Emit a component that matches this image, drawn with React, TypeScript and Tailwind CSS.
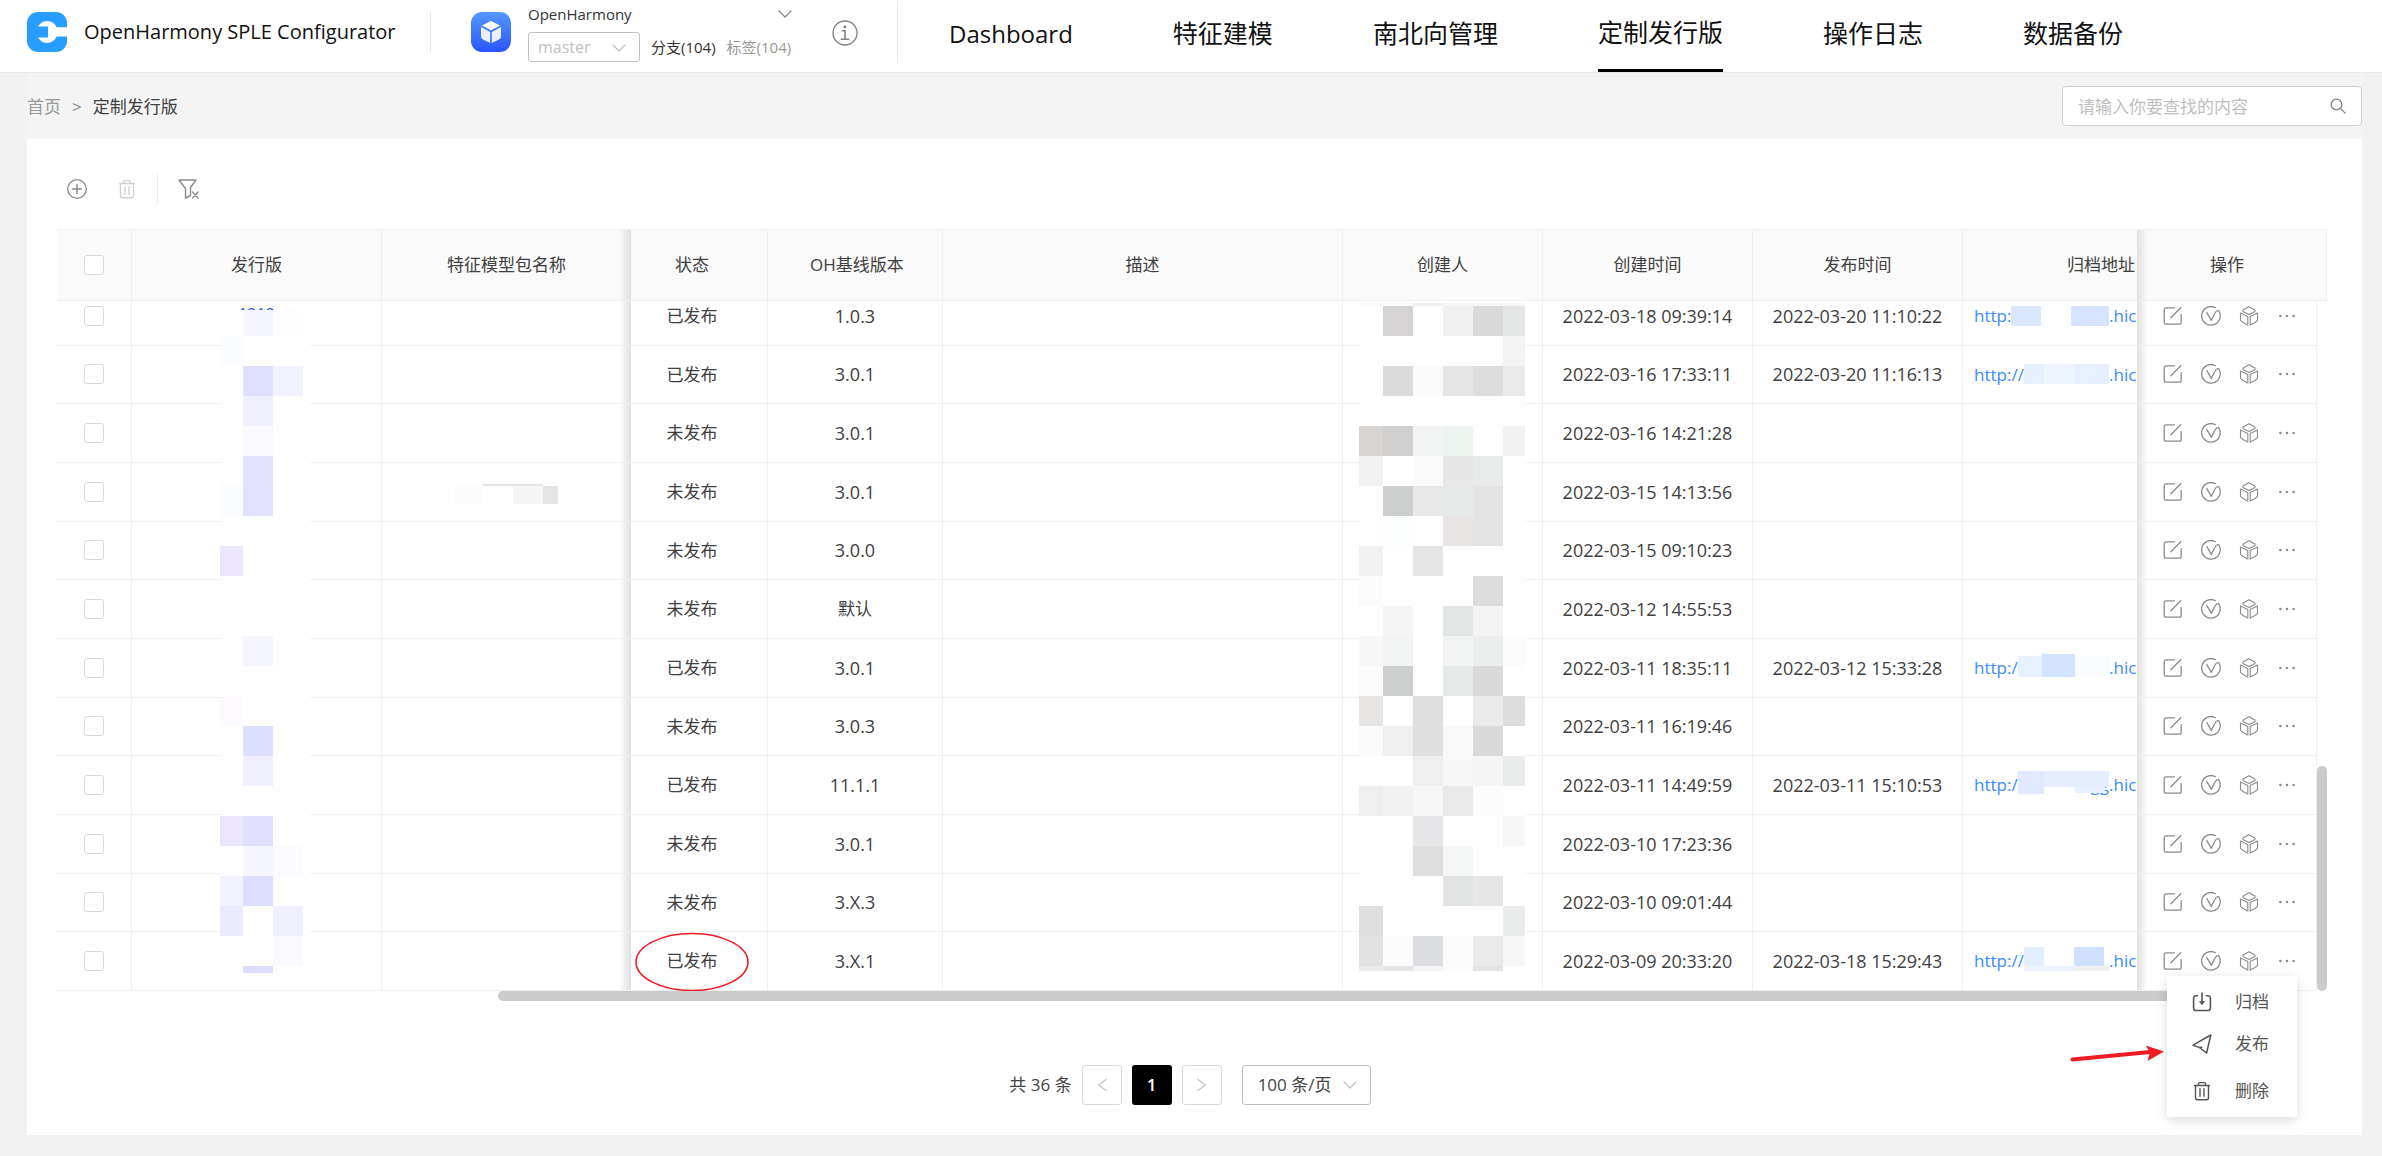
import React from "react";

type Row = {
  status: "已发布" | "未发布";
  baseline: string;
  created: string;
  released?: string;
  link?: LinkMask;
  masked?: boolean;
  circled?: boolean;
  clipped?: boolean;
};

type LinkMask = { prefix: string; tail?: string; blocks: [number, number, number, number, string][] };

const rows: Row[] = [
  {
    status: "已发布",
    baseline: "1.0.3",
    created: "2022-03-18 09:39:14",
    released: "2022-03-20 11:10:22",
    clipped: true,
    link: { prefix: "http:", blocks: [[0, 4, 31, 20, "#dbe6ff"], [31, 4, 30, 20, "#fefefe"], [61, 4, 39, 20, "#d7e3ff"]] },
  },
  {
    status: "已发布",
    baseline: "3.0.1",
    created: "2022-03-16 17:33:11",
    released: "2022-03-20 11:16:13",
    link: { prefix: "http://", blocks: [[0, 4, 24, 20, "#e6efff"], [24, 4, 35, 20, "#eff5ff"], [59, 4, 41, 20, "#e6efff"]] },
  },
  { status: "未发布", baseline: "3.0.1", created: "2022-03-16 14:21:28" },
  { status: "未发布", baseline: "3.0.1", created: "2022-03-15 14:13:56", masked: true },
  { status: "未发布", baseline: "3.0.0", created: "2022-03-15 09:10:23" },
  { status: "未发布", baseline: "默认", created: "2022-03-12 14:55:53" },
  {
    status: "已发布",
    baseline: "3.0.1",
    created: "2022-03-11 18:35:11",
    released: "2022-03-12 15:33:28",
    link: { prefix: "http:/", blocks: [[0, 2, 26, 21, "#e8f1ff"], [26, 0, 36, 23, "#d3e2ff"], [62, 2, 38, 21, "#fafcff"]] },
  },
  { status: "未发布", baseline: "3.0.3", created: "2022-03-11 16:19:46" },
  {
    status: "已发布",
    baseline: "11.1.1",
    created: "2022-03-11 14:49:59",
    released: "2022-03-11 15:10:53",
    link: { prefix: "http:/", tail: "gg", blocks: [[0, 0, 28, 23, "#e0e9ff"], [28, 0, 34, 16, "#e4eeff"], [28, 16, 34, 7, "#fefefe"], [62, 0, 38, 16, "#e4eeff"], [62, 16, 33, 6, "#e8f0ff"]] },
  },
  { status: "未发布", baseline: "3.0.1", created: "2022-03-10 17:23:36" },
  { status: "未发布", baseline: "3.X.3", created: "2022-03-10 09:01:44" },
  {
    status: "已发布",
    baseline: "3.X.1",
    created: "2022-03-09 20:33:20",
    released: "2022-03-18 15:29:43",
    circled: true,
    link: { prefix: "http://", blocks: [[0, 0, 24, 20, "#e4eeff"], [24, 0, 35, 20, "#fefefe"], [59, 0, 35, 20, "#d0e0ff"], [94, 0, 6, 20, "#fefefe"], [0, 19, 59, 5, "#edf4ff"], [59, 19, 41, 5, "#f1f1f1"]] },
  },
];

/* Each line: height of the mosaic band followed by one colour per column. */
const nameBands: [number, string[]][] = [
  [26, ["", "#f5f6ff", "#fdfdff", ""]],
  [30, ["#fbfcff", "", "", ""]],
  [30, ["", "#dfdfff", "#f1f1ff", ""]],
  [30, ["", "#efefff", "", ""]],
  [30, ["", "#f9f9ff", "", ""]],
  [30, ["", "#e2e2ff", "", ""]],
  [30, ["#fbfcff", "#e1e1ff", "", ""]],
  [30, ["", "", "", ""]],
  [30, ["#ece6ff", "", "", ""]],
  [30, ["", "", "", ""]],
  [30, ["", "", "", ""]],
  [30, ["", "#f4f5ff", "", ""]],
  [30, ["", "", "", ""]],
  [30, ["#fcfaff", "", "", ""]],
  [30, ["", "#dcdfff", "", ""]],
  [30, ["", "#efefff", "", ""]],
  [30, ["", "", "", ""]],
  [30, ["#ebe5fd", "#e0dffe", "", ""]],
  [30, ["", "#f5f6ff", "#fbfbff", ""]],
  [30, ["#f2f3ff", "#dcdfff", "", ""]],
  [30, ["#ebebff", "", "#f0effe", ""]],
  [30, ["", "", "#f9f9ff", ""]],
  [7, ["", "#dcdcff", "", ""]],
];

const creatorBands: [number, string[]][] = [
  [3, ["#fafafa", "#fafafa", "#f0f0f0", "#f6f6f6", "#f6f6f6", "#f6f6f6"]],
  [30, ["", "#d6d3d4", "", "#f0f0f0", "#dadada", "#e5e6e6"]],
  [30, ["", "", "", "", "", "#f3f3f3"]],
  [30, ["", "#dbdbdb", "#fafafa", "#e6e6e6", "#dddddd", "#eaeaea"]],
  [30, ["", "", "", "", "", ""]],
  [30, ["#d7d4d2", "#cfcfcf", "#f1f4f3", "#edf4f0", "", "#f1f1f1"]],
  [30, ["#f1f1f1", "", "#fafafa", "#e7e7e7", "#e9ebea", ""]],
  [30, ["", "#cdcfce", "#e8e8e8", "#e5eae8", "#e3e3e3", ""]],
  [30, ["", "#fcfdfd", "", "#e7e5e3", "#e3e3e3", ""]],
  [30, ["#f1f1f1", "", "#e5e5e5", "", "", ""]],
  [30, ["#fbfbfb", "", "", "", "#dcdcdc", ""]],
  [30, ["", "#f5f5f5", "", "#e1e6e4", "#f4f4f4", ""]],
  [30, ["#f7f7f7", "#f1f4f3", "", "#f1f4f3", "#eceded", "#fbfbfb"]],
  [30, ["#fbfbfb", "#cdcfce", "", "#e5eae8", "#dadada", ""]],
  [30, ["#e7e5e3", "", "#dfdfdf", "", "#eaeaea", "#dddddd"]],
  [30, ["#fafafa", "#f0f0f0", "#dfdfdf", "#f8f8f8", "#dadada", ""]],
  [30, ["", "", "#eeeeee", "#f7f7f7", "#f5f5f5", "#e9ecea"]],
  [30, ["#eeeeee", "#f2f2f2", "#f6f6f6", "#e9e9e9", "#fcfcfc", ""]],
  [30, ["", "", "#e6e6e8", "", "", "#f6f6f6"]],
  [30, ["", "", "#dedede", "#f4f7f6", "", ""]],
  [30, ["", "", "", "#e1e4e3", "#e6e6e6", ""]],
  [30, ["#dedede", "", "", "", "", "#e9ecea"]],
  [30, ["#e1e1e1", "#fcfcfc", "#dcdde0", "#fbfbfb", "#eaeaea", "#f6f6f6"]],
  [5, ["#eaeaea", "#e4e4e4", "#f3f3f3", "#fbfbfb", "#e3e3e3", "#fefefe"]],
];

function Mosaic({ bands, columns, className }: { bands: [number, string[]][]; columns: number[]; className: string }) {
  const width = columns.reduce((a, b) => a + b, 0);
  const height = bands.reduce((a, [h]) => a + h, 0);
  const rects: React.ReactNode[] = [];
  let y = 0;
  bands.forEach(([h, colours], r) => {
    let x = 0;
    colours.forEach((fill, c) => {
      if (fill) rects.push(<rect key={`${r}-${c}`} x={x} y={y} width={columns[c]} height={h} fill={fill} />);
      x += columns[c];
    });
    y += h;
  });
  return (
    <svg width={width} height={height} className={className} shapeRendering="crispEdges" aria-hidden="true">
      <rect width={width} height={height} fill="#fefefe" />
      {rects}
    </svg>
  );
}

const stroke = { fill: "none", stroke: "currentColor", strokeLinecap: "round", strokeLinejoin: "round" } as const;

const Chevron = ({ className }: { className: string }) => (
  <svg viewBox="0 0 14 8" width="14" height="8" className={className} aria-hidden="true">
    <path d="M1 1l6 6 6-6" {...stroke} strokeWidth="1.3" />
  </svg>
);

const TrashIcon = () => (
  <svg viewBox="0 0 20 20" width="20" height="20" aria-hidden="true">
    <path d="M2.5 4.5h15M6.5 4.3V2.6a1 1 0 0 1 1-1h5a1 1 0 0 1 1 1v1.7M3.5 4.7v12a2 2 0 0 0 2 2h9a2 2 0 0 0 2-2v-12M8 7.8v7.4M12 7.8v7.4" {...stroke} strokeWidth="1.4" />
  </svg>
);

const EditIcon = () => (
  <svg viewBox="0 0 20 20" width="20" height="20" aria-hidden="true">
    <path d="M11.5 1.8H3.2a2 2 0 0 0-2 2v12.4a2 2 0 0 0 2 2h13a2 2 0 0 0 2-2V8.6M17.8 1.8L7.8 11.8" {...stroke} strokeWidth="1.3" />
  </svg>
);

const CheckIcon = () => (
  <svg viewBox="0 0 20 20" width="20" height="20" aria-hidden="true">
    <path d="M14.4 1.7A9.3 9.3 0 1 0 17.6 4.6C16 4.4 14.8 5.2 14 7l-3.7 7.4L5.9 6.6" {...stroke} strokeWidth="1.3" />
  </svg>
);

const CubeIcon = () => (
  <svg viewBox="0 0 20 20" width="20" height="20" aria-hidden="true">
    <path d="M10 .7l6 3.300v1.400L10 8.500 4 5.400V4zM1.500 7l7.300 3.500v8.600l-5-2.600-2.300-2.200zM18.500 7l-7.300 3.500v8.600l5-2.600 2.300-2.200z" {...stroke} strokeWidth="1.1" />
  </svg>
);

const MoreIcon = () => (
  <svg viewBox="0 0 20 20" width="20" height="20" aria-hidden="true" fill="currentColor">
    <circle cx="3.4" cy="10" r="1.3" />
    <circle cx="10" cy="10" r="1.3" />
    <circle cx="16.6" cy="10" r="1.3" />
  </svg>
);

const ArchiveIcon = () => (
  <svg viewBox="0 0 20 20" width="20" height="20" aria-hidden="true">
    <path d="M5.6 3.8H3.8a2.2 2.2 0 0 0-2.2 2.2v10.3a2.2 2.2 0 0 0 2.2 2.2h12.4a2.2 2.2 0 0 0 2.2-2.2V6a2.2 2.2 0 0 0-2.2-2.2h-1.8M10 1v11" {...stroke} strokeWidth="1.6" />
    <path d="M6.8 9.2L10 12.8l3.2-3.6z" fill="currentColor" />
  </svg>
);

const SendIcon = () => (
  <svg viewBox="0 0 20 20" width="20" height="20" aria-hidden="true">
    <path d="M18.8 1L1 11.2l6.2 2.2 7.4 5.6zM7.2 13.4l2.6-.2" {...stroke} strokeWidth="1.5" />
  </svg>
);

function Columns({ gutter }: { gutter?: boolean }) {
  return (
    <colgroup>
      <col className="w-[75px]" />
      <col className="w-[250px]" />
      <col className="w-[249px]" />
      <col className="w-[137px]" />
      <col className="w-[175px]" />
      <col />
      <col className="w-[200px]" />
      <col className="w-[210px]" />
      <col className="w-[210px]" />
      <col className="w-[174px]" />
      <col className="w-[180px]" />
      {gutter && <col className="w-[10px]" />}
    </colgroup>
  );
}

const box = "block mx-auto size-5 appearance-none rounded-[3px] border border-[#d9d9d9] bg-white checked:bg-black";
const th = "border-y border-r border-[#f0f0f0] p-0 font-normal";
const td = "border-b border-r border-[#f0f0f0] p-0 text-center";
const shadowLeft = "bg-[linear-gradient(to_left,#e0e0e0,transparent_12px)]";
const shadowRight = "bg-[linear-gradient(to_right,#e0e0e0,transparent_10px)]";

const nav = ["Dashboard", "特征建模", "南北向管理", "定制发行版", "操作日志", "数据备份"];

const navClass = (item: string) => {
  if (item === "定制发行版")
    return "flex h-full items-center border-y-[3px] border-t-transparent border-b-black pb-1.5 text-[25px] whitespace-nowrap";
  if (item === "Dashboard") return "flex h-full items-center pb-1 text-2xl whitespace-nowrap";
  return "flex h-full items-center pb-1 text-[25px] whitespace-nowrap";
};

function Header() {
  return (
    <header className="flex h-[73px] items-center border-b border-[#e8e8e8] bg-white pb-2 pl-[27px]">
      <svg viewBox="0 0 40 40" width="40" height="40" aria-hidden="true">
        <rect width="40" height="40" rx="11" fill="#279dff" />
        <path d="M11 14.5C13 11 16.500 9 20 9c4.600 0 8.200 2.800 9.600 6.300H40v9.200H29.600C28.200 28 24.600 31 20 31c-3.500 0-7-2-9-5.500h10v-11z" fill="#fff" />
      </svg>
      <h1 className="ml-[17px] w-[306px] text-xl whitespace-nowrap text-[#111]">OpenHarmony SPLE Configurator</h1>
      <div className="ml-10 h-10 w-px bg-[#e5e5e5]" />
      <svg viewBox="0 0 40 40" width="40" height="40" className="ml-10" aria-hidden="true">
        <defs>
          <linearGradient id="project" x1="0" y1="0" x2="0" y2="1">
            <stop offset="0" stopColor="#5599ff" />
            <stop offset="1" stopColor="#2a55ff" />
          </linearGradient>
        </defs>
        <rect width="40" height="40" rx="11" fill="url(#project)" />
        <path d="M20 9l9 4.500-9 4.700-9-4.700z" fill="#fff" />
        <path d="M10 15l9.200 4.900V31L12 27.500q-2-1-2-3zM30 15l-9.200 4.900V31l7.200-3.500q2-1 2-3z" fill="#eaf0ff" />
      </svg>
      <div className="ml-[17px] flex w-[264px] flex-col gap-2 pt-0.5">
        <button type="button" className="flex h-5 items-center justify-between text-[15px] leading-5 text-[#333]">
          OpenHarmony
          <Chevron className="text-[#888]" />
        </button>
        <div className="flex items-center gap-[11px]">
          <div className="relative">
            <select aria-label="分支" className="block h-[30px] w-28 appearance-none rounded-[3px] border border-[#bfbfbf] bg-white pl-[9px] text-base text-[#bfbfbf]">
              <option>master</option>
            </select>
            <Chevron className="pointer-events-none absolute top-3 right-3.5 text-[#bfbfbf]" />
          </div>
          <button type="button" className="text-[15px] whitespace-nowrap text-[#333]">分支(104)</button>
          <button type="button" className="text-[15px] whitespace-nowrap text-[#999]">标签(104)</button>
        </div>
      </div>
      <button type="button" aria-label="说明" className="ml-10 pt-0.5 text-[#808080]">
        <svg viewBox="0 0 26 26" width="26" height="26" aria-hidden="true">
          <circle cx="13" cy="13" r="12" {...stroke} strokeWidth="1.3" />
          <path d="M10.300 10.700H13v8.300M9.300 19.200h7.400" {...stroke} strokeWidth="1.600" />
          <circle cx="12.800" cy="7" r="1.400" fill="currentColor" />
        </svg>
      </button>
      <div className="ml-[39px] h-[60px] w-px bg-[#e8e8e8]" />
      <nav className="-mb-2 ml-[51px] flex h-[72px] gap-[100px] text-[#111]">
        {nav.map((item) => (
          <a key={item} href="#" className={navClass(item)}>
            {item}
          </a>
        ))}
      </nav>
    </header>
  );
}

function LinkCell({ link }: { link: LinkMask }) {
  return (
    <a href="#" className="flex items-center pl-[11px] text-[#3a8bff]">
      <span>{link.prefix}</span>
      <span className="relative h-7 flex-1 overflow-hidden text-right leading-7">
        {link.tail}
        <svg viewBox="0 0 100 24" preserveAspectRatio="none" className="absolute top-0 left-0 h-6 w-full" shapeRendering="crispEdges" aria-hidden="true">
          {link.blocks.map(([x, y, w, h, fill]) => (
            <rect key={`${x}-${y}`} x={x} y={y} width={w} height={h} fill={fill} />
          ))}
        </svg>
      </span>
      <span className="w-7 overflow-hidden">.hic</span>
    </a>
  );
}

function DataTable() {
  return (
    <div>
      <table className="w-full table-fixed border-separate border-spacing-0">
        <Columns gutter />
        <thead>
          <tr className="h-[72px] bg-[#fafafa]">
            <th className={th}><input type="checkbox" aria-label="全选" className={box} /></th>
            <th className={th}>发行版</th>
            <th className={`border-y border-[#f0f0f0] p-0 font-normal ${shadowLeft}`}>特征模型包名称</th>
            <th className={`${th} pr-3.5`}>状态</th>
            <th className={`${th} pl-1`}>OH基线版本</th>
            <th className={th}>描述</th>
            <th className={th}>创建人</th>
            <th className={th}>创建时间</th>
            <th className={th}>发布时间</th>
            <th className="border-y border-[#f0f0f0] p-0 pr-0.5 text-right font-normal">归档地址</th>
            <th className={`border-y border-[#f0f0f0] p-0 font-normal ${shadowRight}`}>操作</th>
            <td className="border-y border-r border-[#f0f0f0]" />
          </tr>
        </thead>
      </table>
      <div className="relative">
        <div className="flex h-[690px] items-end overflow-hidden pr-[10px]">
          <table className="h-[704px] w-full table-fixed border-separate border-spacing-0">
            <Columns />
            <tbody>
              {rows.map((row) => (
                <tr key={row.created} className="h-[58px]">
                  <td className={td}><input type="checkbox" aria-label={`选择 ${row.created}`} className={box} /></td>
                  <td className={td}>{row.clipped && <span className="block pb-1 text-base text-[#2f54eb]">1212</span>}</td>
                  <td className={`border-b border-[#f0f0f0] p-0 ${shadowLeft}`}>
                    {row.masked && (
                      <svg width="103" height="20" className="mx-auto mt-1" shapeRendering="crispEdges" aria-hidden="true">
                        <rect x="0" width="28" height="20" fill="#fcfcfc" />
                        <rect x="28" width="60" height="2" fill="#e6e6e6" />
                        <rect x="58" y="2" width="30" height="18" fill="#f5f5f5" />
                        <rect x="88" y="2" width="15" height="18" fill="#e4e4e4" />
                      </svg>
                    )}
                  </td>
                  <td className={`${td} pr-3.5`}>
                    <span className="relative">
                      {row.status}
                      {row.circled && (
                        <svg viewBox="0 0 114 60" width="114" height="60" className="absolute -top-[17px] -left-8" aria-hidden="true">
                          <ellipse cx="57" cy="30" rx="56" ry="28.500" fill="none" stroke="#ed1c24" strokeWidth="1.600" />
                        </svg>
                      )}
                    </span>
                  </td>
                  <td className={row.baseline === "默认" ? td : `${td} text-lg`}>{row.baseline}</td>
                  <td className={td} />
                  <td className={td} />
                  <td className={`${td} text-lg`}>{row.created}</td>
                  <td className={`${td} text-lg`}>{row.released}</td>
                  <td className="border-b border-[#f0f0f0] p-0">{row.link && <LinkCell link={row.link} />}</td>
                  <td className={`${td} ${shadowRight}`}>
                    <div className="flex items-center gap-[18px] pl-[26px] text-[#8c8c8c]">
                      <button type="button" aria-label="编辑"><EditIcon /></button>
                      <button type="button" aria-label="校验"><CheckIcon /></button>
                      <button type="button" aria-label="构建"><CubeIcon /></button>
                      <button type="button" aria-label="更多"><MoreIcon /></button>
                    </div>
                  </td>
                </tr>
              ))}
            </tbody>
          </table>
        </div>
        <Mosaic bands={nameBands} columns={[23, 30, 30, 7]} className="absolute top-[9px] left-[163px]" />
        <Mosaic bands={creatorBands} columns={[24, 30, 30, 30, 30, 22]} className="absolute top-0.5 right-[802px]" />
        <div className="absolute right-0 bottom-0 h-[225px] w-[10px] rounded-full bg-[#cbcbcb]" />
        <MoreMenu />
      </div>
      <div className="mr-[93px] ml-[441px] h-[10px] rounded-full bg-[#cbcbcb]" />
    </div>
  );
}

function MoreMenu() {
  return (
    <div className="absolute top-full right-[30px] z-10 -mt-[15px] w-[130px] rounded-[3px] bg-white/98 pt-1 shadow-[0_3px_12px_rgba(0,0,0,0.15)]">
      <ul className="text-[#555]">
        <li>
          <button type="button" className="flex h-11 w-full items-center gap-[23px] pl-[25px]"><ArchiveIcon />归档</button>
        </li>
        <li>
          <button type="button" className="flex h-10 w-full items-center gap-[23px] pl-[25px]"><SendIcon />发布</button>
        </li>
        <li>
          <button type="button" className="flex h-[53px] w-full items-center gap-[23px] pl-[25px]"><TrashIcon />删除</button>
        </li>
      </ul>
      <svg viewBox="0 0 94 20" width="94" height="20" className="absolute top-[68px] right-full mr-[3px]" aria-hidden="true">
        <path d="M2.500 15.500L80 8" stroke="#ed1c24" strokeWidth="4" strokeLinecap="round" />
        <path d="M75.500 1.500L94 7.500 77.500 17l2.500-9z" fill="#ed1c24" />
      </svg>
    </div>
  );
}

function Pagination() {
  const arrow = "flex size-10 items-center justify-center rounded-[3px] border border-[#d9d9d9] text-[#c4c4c4]";
  return (
    <div className="mt-16 flex items-center justify-center gap-[10px] pr-1 text-[#444]">
      <span className="whitespace-nowrap">共 36 条</span>
      <button type="button" aria-label="上一页" className={arrow}>
        <svg viewBox="0 0 10 14" width="10" height="14" aria-hidden="true"><path d="M9 1.500L1.500 7 9 12.500" {...stroke} strokeWidth="1.300" /></svg>
      </button>
      <button type="button" className="size-10 rounded-[3px] bg-black font-semibold text-white">1</button>
      <button type="button" aria-label="下一页" className={arrow}>
        <svg viewBox="0 0 10 14" width="10" height="14" aria-hidden="true"><path d="M1 1.500L8.500 7 1 12.500" {...stroke} strokeWidth="1.300" /></svg>
      </button>
      <div className="relative ml-[10px]">
        <select aria-label="每页条数" className="block h-10 w-[129px] appearance-none rounded-[3px] border border-[#bfbfbf] bg-white pl-[15px]">
          <option>100 条/页</option>
        </select>
        <Chevron className="pointer-events-none absolute top-4 right-3.5 text-[#bfbfbf]" />
      </div>
    </div>
  );
}

export default function App() {
  return (
    <div className="min-h-screen bg-[#f2f2f2] pb-[21px] font-['Open_Sans','Noto_Sans_CJK_SC',sans-serif] text-[17px] text-[#404040]">
      <Header />
      <main className="mr-5 ml-[27px] bg-[#f4f4f4]">
        <div className="flex h-[66px] items-center justify-between">
          <div className="flex items-center gap-[11px] pt-0.5">
            <a href="#" className="text-[#999]">首页</a>
            <span className="text-[#888]">&gt;</span>
            <span>定制发行版</span>
          </div>
          <div className="relative">
            <input
              type="search"
              aria-label="搜索"
              placeholder="请输入你要查找的内容"
              className="block h-10 w-[300px] rounded-[4px] border border-[#d0d0d0] bg-white pr-10 pl-[15px] placeholder:text-[#bfbfbf]"
            />
            <svg viewBox="0 0 18 18" width="16" height="16" className="pointer-events-none absolute top-3 right-4 text-[#808080]" aria-hidden="true">
              <path d="M12 12l5 5" {...stroke} strokeWidth="1.400" />
              <circle cx="7.300" cy="7.300" r="6" {...stroke} strokeWidth="1.400" />
            </svg>
          </div>
        </div>
        <section className="bg-white pt-[35px] pr-[35px] pb-[30px] pl-[30px]">
          <div className="mb-[25px] flex h-[30px] items-center pl-[10px] text-[#8c8c8c]">
            <button type="button" aria-label="新增">
              <svg viewBox="0 0 20 20" width="20" height="20" aria-hidden="true">
                <circle cx="10" cy="10" r="9.300" {...stroke} strokeWidth="1.300" />
                <path d="M10 5.500v9M5.500 10h9" {...stroke} strokeWidth="1.500" />
              </svg>
            </button>
            <button type="button" aria-label="删除" disabled className="ml-[30px] text-[#d2d2d2]"><TrashIcon /></button>
            <div className="ml-5 h-[30px] w-px bg-[#ececec]" />
            <button type="button" aria-label="清除筛选" className="ml-5">
              <svg viewBox="0 0 21 20" width="21" height="20" aria-hidden="true">
                <path d="M1 1h17l-5.500 7.500v8L7.500 19V9.500z" {...stroke} strokeWidth="1.400" />
                <path d="M14.500 13l5.500 6M20 13l-5.500 6" {...stroke} strokeWidth="1.400" />
              </svg>
            </button>
          </div>
          <DataTable />
          <Pagination />
        </section>
      </main>
    </div>
  );
}
